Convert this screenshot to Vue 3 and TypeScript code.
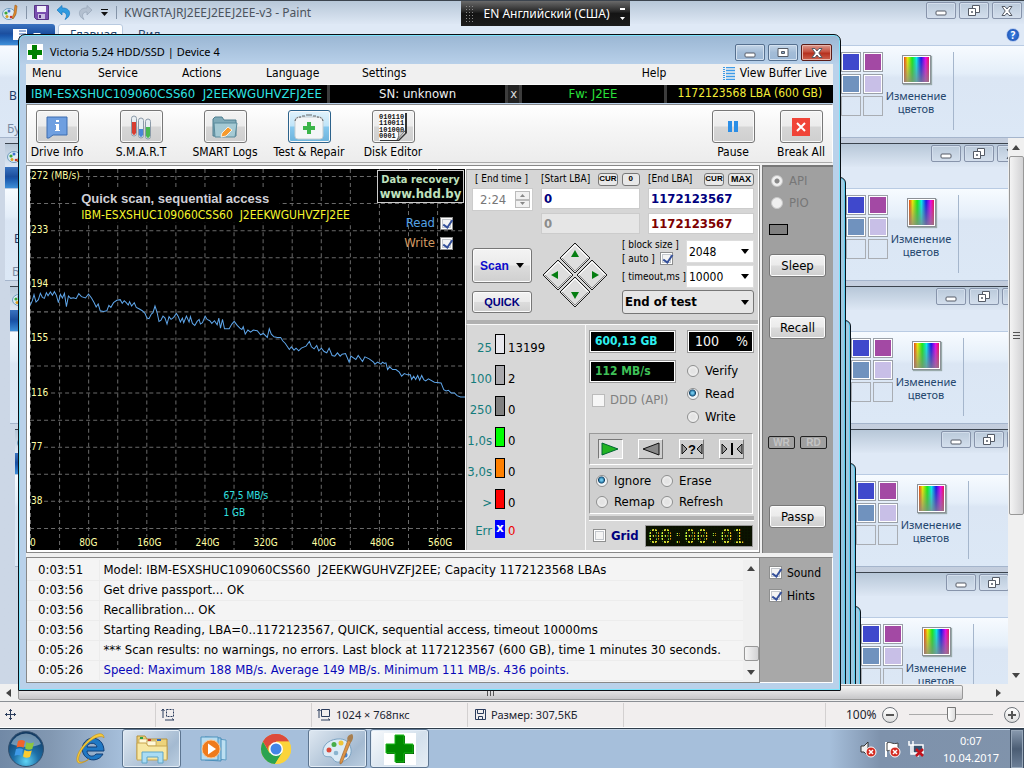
<script setup lang="ts">
import { ref } from 'vue'

interface Stat { label: string; color: string; count: string; err?: boolean }
interface LogRow { time: string; text: string; accent?: boolean }

const layers = [0, 1, 2, 3, 4]
const swatches = ['#3f48cc', '#a349a4', '#7092be', '#c8bfe7', '', '']

const readOn = ref(true)
const writeOn = ref(true)
const autoOn = ref(true)
const sound = ref(true)
const hints = ref(true)
const grid = ref(false)
const mode = ref('Read')
const action = ref('Ignore')
const endTime = ref('2:24')
const startLba = ref('0')
const endLba = ref('1172123567')
const zoomLevel = ref(50)

const stats: Stat[] = [
  { label: '25', color: '#e8e8ee', count: '13199' },
  { label: '100', color: '#a8a8ac', count: '2' },
  { label: '250', color: '#808080', count: '0' },
  { label: '1,0s', color: '#00ff00', count: '0' },
  { label: '3,0s', color: '#ff8000', count: '0' },
  { label: '>', color: '#ff0000', count: '0' },
  { label: 'Err', color: '#0000ff', count: '0', err: true },
]

const log: LogRow[] = [
  { time: '0:03:51', text: 'Model: IBM-ESXSHUC109060CSS60  J2EEKWGUHVZFJ2EE; Capacity 1172123568 LBAs' },
  { time: '0:03:56', text: 'Get drive passport... OK' },
  { time: '0:03:56', text: 'Recallibration... OK' },
  { time: '0:03:56', text: 'Starting Reading, LBA=0..1172123567, QUICK, sequential access, timeout 10000ms' },
  { time: '0:05:26', text: '*** Scan results: no warnings, no errors. Last block at 1172123567 (600 GB), time 1 minutes 30 seconds.' },
  { time: '0:05:26', text: 'Speed: Maximum 188 MB/s. Average 149 MB/s. Minimum 111 MB/s. 436 points.', accent: true },
]

const gridX = Array.from({ length: 15 }, (_, i) => i * 29)
const gridY = Array.from({ length: 14 }, (_, i) => 7 + i * 27)
const speedLabels = ['272 (MB/s)', '233', '194', '155', '116', '77', '38']
const sizeLabels = ['0', '80G', '160G', '240G', '320G', '400G', '480G', '560G']

// Speed samples, three units to one pixel of the chart.
const trace = `31,437 37,424 42,406 48,428 55,421 61,402 67,414 73,417 79,400 84,409 91,398 97,408 103,397 109,408
115,430 121,405 127,416 133,402 139,442 145,410 152,417 160,415 168,418 176,403 184,412 196,416 205,404 214,416
222,430 228,443 234,434 240,454 250,456 260,454 266,438 272,444 280,430 290,423 300,421 306,432 312,424 318,430
324,437 328,427 334,440 342,430 348,444 356,448 366,454 374,462 380,476 386,478 393,464 398,460 404,440 410,458
416,486 422,482 428,470 434,476 440,494 446,472 452,480 460,474 468,462 474,472 480,488 486,476 490,490 498,470
506,488 510,472 516,492 523,498 530,486 536,480 540,494 546,490 554,470 560,480 568,484 574,492 582,484 590,496
595,476 600,506 606,480 612,508 626,508 634,494 641,486 650,498 658,506 664,510 668,502 674,524 682,512 690,518
698,512 710,514 720,526 728,522 740,534 746,508 752,524 760,532 770,534 780,534 786,544 794,552 802,564 806,570
812,562 820,572 826,566 834,574 842,566 856,560 866,546 872,562 880,568 888,558 894,574 902,566 910,576 918,580
925,566 934,588 942,590 950,580 958,590 964,584 974,582 985,608 990,590 1005,600 1012,588 1025,606 1032,592
1045,598 1058,608 1062,614 1070,608 1080,614 1085,608 1090,612 1095,610 1100,630 1106,622 1115,630 1125,630
1135,638 1142,650 1150,642 1160,646 1168,646 1172,660 1178,650 1184,660 1190,648 1196,662 1202,648 1208,660
1214,664 1222,658 1240,668 1260,670 1268,690 1275,694 1282,692 1290,700 1300,700 1308,708 1318,712 1332,712`
</script>

<template>
  <div class="screen">
    <div class="paint">
      <section
        v-for="i in layers"
        :key="'p' + i"
        class="layer"
        :style="{ left: i * 5 + 'px', top: i * 143 + 'px', zIndex: i }"
      >
        <header class="p-title">
          <svg class="palette" width="17" height="17" viewBox="0 0 17 17">
            <ellipse cx="7" cy="10" rx="6.5" ry="5.5" fill="#dcebf5" stroke="#6f9cbd" />
            <circle cx="4" cy="9" r="1.6" fill="#38a53a" /><circle cx="7" cy="7" r="1.5" fill="#3f6fd0" />
            <circle cx="5" cy="12.500" r="1.500" fill="#d8a020" /><circle cx="9" cy="13" r="1.300" fill="#c33" />
            <path d="M13 1l2 1-1 8-3 5-1-1 2-5z" fill="#e08a2c" stroke="#a05c18" stroke-width=".6" />
          </svg>
          <template v-if="i === 0">
            <i class="v-line"></i>
            <svg width="15" height="15" viewBox="0 0 15 15">
              <path d="M.5.5h14v14h-12l-2-2z" fill="#7a4fb0" stroke="#573485" />
              <path d="M3 1h9v6H3z" fill="#f1effa" /><path d="M4 9h7v5H4z" fill="#c9bfe2" /><path d="M5 10h2v3H5z" fill="#573485" />
            </svg>
            <svg width="15" height="15" viewBox="0 0 15 15">
              <path d="M1 5L6 .5V3c9-.5 10 8 3 11.500C12 10 10 7 6 7v3z" fill="#2f9be0" stroke="#1878c0" stroke-width=".7" />
            </svg>
            <svg width="15" height="15" viewBox="0 0 15 15">
              <path d="M14 5L9 .5V3C0 2.500-1 11 6 14.500 3 10 5 7 9 7v3z" fill="#b3c0d0" stroke="#96a5b8" stroke-width=".7" />
            </svg>
            <svg width="9" height="9" viewBox="0 0 9 9"><path d="M1 1h7v1H1zM1 4h7L4.500 8z" fill="#111" /></svg>
            <i class="v-line"></i>
            <span class="p-name">KWGRTAJRJ2EEJ2EEJ2EE-v3 - Paint</span>
          </template>
          <div class="caption">
            <button aria-label="Свернуть"><svg width="12" height="12" viewBox="0 0 12 12"><rect x="1" y="6" width="10" height="4" rx="1" fill="#fff" stroke="#555b66" /></svg></button>
            <button aria-label="Восстановить"><svg width="12" height="12" viewBox="0 0 12 12"><g fill="#fff" stroke="#555b66"><path d="M4.500.5h7v7h-7z" /><path d="M.5 3.500h7v7h-7z" /><path d="M3.500 6.500h1v1h-1z" /></g></svg></button>
            <button aria-label="Закрыть"><svg width="12" height="12" viewBox="0 0 12 12"><path d="M1 1.500h3l2 2.500 2-2.500h3L7.800 6 11 10.500H8L6 8l-2 2.500H1L4.200 6z" fill="#fff" stroke="#555b66" /></svg></button>
          </div>
        </header>
        <nav class="p-tabs">
          <button class="file" aria-label="Файл">
            <svg v-if="i === 0" width="30" height="13" viewBox="0 0 30 13"><path d="M1 1h14v11H1z" fill="#fff" /><path d="M7 3h7M7 6h7M7 9h7" stroke="#2c5fae" /><path d="M21 5h8l-4 4z" fill="#fff" /></svg>
          </button>
          <template v-if="i === 0">
            <a href="#" class="on">Главная</a>
            <a href="#">Вид</a>
            <span class="help">?</span>
          </template>
        </nav>
        <div class="ribbon">
          <div class="clip"><template v-if="i < 2"><span>В</span><small>Бу</small></template></div>
          <div class="swatches">
            <i v-for="(c, n) in swatches" :key="n" :class="{ empty: !c }" :style="{ background: c || 'transparent' }"></i>
          </div>
          <button class="edit">
            <i class="rainbow"></i>
            <span>Изменение<br />цветов</span>
          </button>
          <i class="r-line"></i>
        </div>
      </section>

      <div v-for="i in layers.slice(1)" :key="'g' + i" class="ghost" :style="{ left: 18 + i * 5 + 'px', top: 34 + i * 143 + 'px', zIndex: 9 - i }"></div>

      <div class="v-scroll">
        <svg width="8" height="5" viewBox="0 0 8 5"><path d="M0 5h8L4 0z" fill="#444" /></svg>
        <div class="v-thumb"><i></i></div>
        <svg width="8" height="5" viewBox="0 0 8 5"><path d="M0 0h8L4 5z" fill="#444" /></svg>
      </div>
      <div class="h-scroll">
        <svg width="5" height="8" viewBox="0 0 5 8"><path d="M5 0v8L0 4z" fill="#444" /></svg>
        <div class="h-thumb"><i></i></div>
        <svg width="5" height="8" viewBox="0 0 5 8"><path d="M0 0v8l5-4z" fill="#444" /></svg>
      </div>
    </div>

    <footer class="status">
      <span class="cell"><svg width="11" height="11" viewBox="0 0 11 11"><path d="M5.500 0v11M0 5.500h11M4 2l1.500-1.500L7 2M4 9l1.500 1.500L7 9M2 4L.5 5.500 2 7M9 4l1.500 1.500L9 7" fill="none" stroke="#2b3c5c" /></svg></span>
      <span class="cell"><svg width="14" height="13" viewBox="0 0 14 13"><path d="M2 10V1M.5 3L2 1l1.500 2M4 12h9M11 10.500l2 1.500" fill="none" stroke="#2b3c5c" /><path d="M5.500 1.500h7v7h-7z" fill="none" stroke="#2b3c5c" stroke-dasharray="2 1" /></svg></span>
      <span class="cell"><svg width="14" height="13" viewBox="0 0 14 13"><path d="M2 10V1M.5 3L2 1l1.500 2M4 12h9M11 10.500l2 1.500M4.500 1.500h8v7h-8z" fill="none" stroke="#2b3c5c" /></svg>1024 × 768пкс</span>
      <span class="cell save"><svg width="11" height="11" viewBox="0 0 11 11"><path d="M.5.5h10v10H.5zM2.500.5v4h6v-4M3.500 10.500v-3h4v3" fill="none" stroke="#2b3c5c" /></svg>Размер: 307,5КБ</span>
      <span class="cell rest"></span>
      <label class="zoom"><span>100%</span>
        <button class="round" aria-label="Уменьшить"><svg width="14" height="14" viewBox="0 0 14 14"><path d="M3 6h8v2H3z" fill="#555" /></svg></button>
        <input v-model="zoomLevel" type="range" min="0" max="100" aria-label="Масштаб" />
        <button class="round" aria-label="Увеличить"><svg width="14" height="14" viewBox="0 0 14 14"><path d="M3 6h3V3h2v3h3v2H8v3H6V8H3z" fill="#555" /></svg></button>
      </label>
    </footer>

    <div class="taskbar">
      <button class="orb" aria-label="Пуск">
        <svg width="38" height="38" viewBox="0 0 38 38">
          <defs>
            <radialGradient id="orb" cx=".5" cy=".85" r=".8"><stop offset="0" stop-color="#5fd4f5" /><stop offset=".45" stop-color="#1d6fa8" /><stop offset="1" stop-color="#123a63" /></radialGradient>
          </defs>
          <circle cx="19" cy="19" r="17.500" fill="url(#orb)" stroke="#33506e" />
          <path d="M4 14a16 16 0 0 1 30 0c-8 4-20 4-30 0z" fill="#c8dbe9" opacity=".5" />
          <path d="M11 11c3-1.500 5-1 7 .3l-1.500 6.500c-2-1.200-4-1.500-7-.3z" fill="#f0642c" />
          <path d="M19.500 12c2.500 1.500 4.500 1.600 7.500.3L25.300 19c-2.500 1.200-4.800 1-7.200-.4z" fill="#8cc63e" />
          <path d="M9 19c3-1.300 5-.9 7 .3L14.500 26c-2-1.200-4-1.500-7-.3z" fill="#3f9ae8" />
          <path d="M17.500 20c2.500 1.400 4.700 1.600 7.300.4L23 27c-2.500 1.200-4.800 1-7-.4z" fill="#fccb2f" />
        </svg>
      </button>
      <button class="task" aria-label="Internet Explorer">
        <svg width="34" height="34" viewBox="0 0 34 34">
          <path d="M19 6a11 11 0 1 0 11 16h-7c-3 4-9 2-9-3h17C31 11 26 6 19 6zm-5 9c1-5 9-5 10 0z" fill="#1f78c4" stroke="#123f77" />
          <path d="M31 6c-2-3-9-1-15 4S4 25 6 29c1 2 6 1 10-2-5 4-11 6-12 2C2 22 12 10 19 5s12-4 12 1z" fill="#f6cc3c" stroke="#c58d12" stroke-width=".6" />
        </svg>
      </button>
      <button class="task open" aria-label="Проводник">
        <svg width="34" height="32" viewBox="0 0 34 32">
          <path d="M2 3h8l2 3h20v20H2z" fill="#edd37b" stroke="#b4903c" />
          <path d="M4 6h8v5H4z" fill="#fff8d8" stroke="#b4903c" stroke-width=".6" /><path d="M12 8h9v5h-9z" fill="#fff8d8" stroke="#b4903c" stroke-width=".6" />
          <path d="M5 4h3v2H5z" fill="#2c9e44" /><path d="M13 6h3v2h-3z" fill="#c8382c" /><path d="M22 6h4v2h-4z" fill="#2e68c0" />
          <path d="M2 10h9l2 3h19v14H2z" fill="#f7e7a2" stroke="#c8a651" />
          <path d="M7 30V19h21v11h-5v-6H12v6z" fill="#a9dcf4" stroke="#5ea5c8" />
        </svg>
      </button>
      <button class="task" aria-label="Проигрыватель">
        <svg width="30" height="30" viewBox="0 0 30 30">
          <path d="M11 4l16 2v20l-16-2z" fill="#bcdff2" stroke="#5c9cc4" /><path d="M6 3l16 1v23L6 26z" fill="#9ccdea" stroke="#4a8cb8" /><path d="M2 3h17v23H2z" fill="#b8dcf0" stroke="#4f93bd" />
          <circle cx="12" cy="15" r="9" fill="#ef7b1c" stroke="#fcc48d" /><path d="M9 9.500v11l8-5.500z" fill="#fff" />
        </svg>
      </button>
      <button class="task" aria-label="Chrome">
        <svg width="32" height="32" viewBox="0 0 32 32">
          <circle cx="16" cy="16" r="15" fill="#fbd43c" />
          <path d="M16 16L3 8.500A15 15 0 0 1 29 8.500H16z" fill="#dd4b3c" /><path d="M16 16l-6.500 4L3 8.500A15 15 0 0 0 15 31l7-11z" fill="#2aa350" />
          <path d="M3 8.500A15 15 0 0 1 29 8.500H16a7 7 0 0 0-6.500 11z" fill="#dd4b3c" />
          <path d="M16 8.500h13A15 15 0 0 1 15 31l7-11z" fill="#fbd43c" />
          <circle cx="16" cy="16" r="7" fill="#fff" /><circle cx="16" cy="16" r="5.500" fill="#4285e8" />
        </svg>
      </button>
      <button class="task open" aria-label="Paint">
        <svg width="34" height="32" viewBox="0 0 34 32">
          <path d="M16 6C6 7 1 14 2 20c1 5 5 3 8 4s2 6 9 5c8-1 12-7 11-13S25 5 16 6z" fill="#dcebf6" stroke="#7ba3c2" />
          <circle cx="8" cy="17" r="2.500" fill="#dc4a3a" /><circle cx="13" cy="11.500" r="2.500" fill="#48ad4a" /><circle cx="20" cy="10" r="2.500" fill="#eec53a" /><circle cx="15" cy="20" r="2.300" fill="#8ab4cf" /><circle cx="24" cy="22" r="2.500" fill="#4483d2" />
          <path d="M27 7l3 1-9 22-2 1v-3z" fill="#dd9448" stroke="#9b5f25" stroke-width=".6" /><path d="M27 8c-2-3 0-6 4-7 2 2 1 6-1 8z" fill="#a87f50" />
        </svg>
      </button>
      <button class="task open active" aria-label="Victoria">
        <svg width="32" height="32" viewBox="0 0 32 32"><path d="M0 0h32v32H0z" fill="#fff" /><path d="M12 3h9v9h9v9h-9v9h-9v-9H3v-9h9z" fill="#054d05" /><path d="M11 2h9v9h9v9h-9v9h-9v-9H2v-9h9z" fill="#008a00" stroke="#18b818" /></svg>
      </button>
      <div class="tray">
        <svg width="18" height="18" viewBox="0 0 18 18"><path d="M2 6h3l4-4v14l-4-4H2z" fill="#eee" stroke="#333" /><circle cx="12" cy="12" r="5" fill="#d42a20" stroke="#fff" /><path d="M10 10l4 4m0-4l-4 4" stroke="#fff" stroke-width="1.500" /></svg>
        <svg width="18" height="18" viewBox="0 0 18 18"><path d="M3 2v15" stroke="#fff" stroke-width="2" /><path d="M4 3c4-2 5 2 11 0v8c-6 2-7-2-11 0z" fill="#fff" stroke="#444" /><circle cx="12" cy="12" r="5" fill="#d42a20" stroke="#fff" /><path d="M10 10l4 4m0-4l-4 4" stroke="#fff" stroke-width="1.500" /></svg>
        <svg width="18" height="18" viewBox="0 0 18 18"><path d="M6 5h10v8H6z" fill="#36506c" stroke="#fff" stroke-width="1.500" /><path d="M2 1v4h4V1M4 5v9h7v3" fill="none" stroke="#fff" stroke-width="1.500" /><path d="M9 9l7 7m0-7l-7 7" stroke="#c3121c" stroke-width="2.500" /></svg>
      </div>
      <time class="clock"><span>0:07</span><span>10.04.2017</span></time>
      <button class="peek" aria-label="Свернуть все окна"></button>
    </div>

    <div class="lang"><i class="grip"></i><span>EN Английский (США)</span>
      <svg width="7" height="14" viewBox="0 0 7 14"><path d="M1 1h5v2H1zM1 10h5L3.500 13z" fill="#fff" /></svg>
    </div>

    <main class="victoria">
      <header class="v-title">
        <svg width="16" height="16" viewBox="0 0 16 16"><path d="M0 0h16v16H0z" fill="#fff" /><path d="M5 1h5v5h5v5h-5v4H5v-4H1V6h4z" fill="#008000" /></svg>
        <h1>Victoria 5.24 HDD/SSD | Device 4</h1>
        <div class="caption own">
          <button aria-label="Minimize"><svg width="12" height="12" viewBox="0 0 12 12"><rect x="1" y="6" width="10" height="4" rx="1" fill="#fff" stroke="#555b66" /></svg></button>
          <button aria-label="Maximize"><svg width="12" height="12" viewBox="0 0 12 12"><path d="M1 1.500h10v8H1z" fill="#fff" stroke="#555b66" /><path d="M4.500 4.500h3v2h-3z" fill="#8aa9c8" stroke="#555b66" /></svg></button>
          <button class="close" aria-label="Close"><svg width="12" height="12" viewBox="0 0 12 12"><path d="M1 1.500h3l2 2.500 2-2.500h3L7.800 6 11 10.500H8L6 8l-2 2.500H1L4.200 6z" fill="#fff" stroke="#555b66" /></svg></button>
        </div>
      </header>

      <nav class="menu">
        <a href="#">Menu</a><a href="#">Service</a><a href="#">Actions</a><a href="#">Language</a><a href="#">Settings</a>
        <a href="#" class="m-help">Help</a>
        <button class="live">
          <svg width="13" height="13" viewBox="0 0 13 13"><g stroke="#3d9be8"><path d="M0 .5h2M0 2.500h2M0 4.500h2M0 6.500h2M0 8.500h2M0 10.500h2M0 12.500h2" /><path d="M3 .5h9M3 3.500h9M3 6.500h9M3 9.500h9M3 12.500h9" stroke-width="1.500" /></g></svg>
          View Buffer Live
        </button>
      </nav>

      <div class="info">
        <span class="model">IBM-ESXSHUC109060CSS60&nbsp; J2EEKWGUHVZFJ2EE</span>
        <span class="sn">SN: unknown</span>
        <button class="x">x</button>
        <span class="fw">Fw: J2EE</span>
        <span class="lba">1172123568 LBA (600 GB)</span>
      </div>

      <div class="tools">
        <button class="tool"><i>
          <svg width="22" height="24" viewBox="0 0 22 24"><path d="M1 2h20v18H7l-4 3H1z" fill="#6f9fe0" stroke="#3c6db0" /><path d="M10 5h3v2h-3zM9 9h4v6h1v1H9v-1h1v-5H9z" fill="#fff" /></svg></i>Drive Info</button>
        <button class="tool"><i>
          <svg width="22" height="26" viewBox="0 0 22 26"><g fill="#e8eef2" stroke="#8b9aa8"><rect x="1.500" y="2" width="5" height="20" rx="2.500" /><rect x="8.500" y="4" width="5" height="20" rx="2.500" /><rect x="15.500" y="5" width="5" height="20" rx="2.500" /></g><path d="M2 8h4v11q-2 4-4 0z" fill="#d83c30" /><path d="M9 15h4v6q-2 4-4 0z" fill="#4887d8" /><path d="M16 13h4v9q-2 4-4 0z" fill="#48b850" /></svg></i>S.M.A.R.T</button>
        <button class="tool"><i>
          <svg width="26" height="24" viewBox="0 0 26 24"><path d="M1 4l2-2h7l2 3h12v16H1z" fill="#7faab8" stroke="#4f7f90" /><path d="M2 8h23l-2 14H3z" fill="#a5cad4" stroke="#5b8b9c" /><path d="M9 22l1-4 6-6 4 3-6 6z" fill="#f69a2c" stroke="#fff" stroke-width=".8" /></svg></i>SMART Logs</button>
        <button class="tool sel"><i>
          <svg width="32" height="27" viewBox="0 0 32 27"><rect x="2" y="4" width="28" height="22" rx="3" fill="#f4f6f7" stroke="#c5ced2" /><path d="M2 8q1-4 6-4M30 8q-1-4-6-4" fill="none" stroke="#555" stroke-dasharray="2 1" /><path d="M9 3h3M13 2h6M20 3h3" stroke="#666" /><path d="M14 9h4v4h4v4h-4v4h-4v-4h-4v-4h4z" fill="#3bb54a" /></svg></i>Test &amp; Repair</button>
        <button class="tool"><i class="bits">
          <svg width="30" height="31" viewBox="0 0 30 31"><path d="M2 2h27v20l-8 8H2z" fill="#333" /><path d="M1 1h26v21l-7 7H1z" fill="#fafafa" />
            <g class="binary"><text x="1" y="8">010110</text><text x="1" y="14">110011</text><text x="1" y="21">101000</text><text x="1" y="27">0001</text></g><path d="M27 20c-3 1-5 1-7 0 1 3 1 6-1 9z" fill="#ccc" stroke="#444" stroke-width=".7" /></svg></i>Disk Editor</button>
        <span class="fill"></span>
        <button class="tool"><i><svg width="10" height="11" viewBox="0 0 10 11"><path d="M0 0h4v11H0zM6 0h4v11H6z" fill="#2b8ee6" /></svg></i>Pause</button>
        <button class="tool last"><i><svg width="18" height="18" viewBox="0 0 18 18"><path d="M0 0h18v18H0z" fill="#f04438" /><path d="M5 5l8 8m0-8l-8 8" stroke="#fff" stroke-width="2" /></svg></i>Break All</button>
      </div>

      <div class="body">
        <section class="work">
          <div class="graph">
            <svg class="plot" viewBox="0 0 435 380" preserveAspectRatio="xMinYMin slice">
              <g stroke="#6a6a6a" stroke-dasharray="4 3">
                <path v-for="x in gridX" :key="'x' + x" :d="`M${x + 0.5} 0V380`" />
                <path v-for="y in gridY" :key="'y' + y" :d="`M0 ${y + 0.5}H435`" />
              </g>
              <g transform="translate(-10 -10) scale(.33333)"><polyline :points="trace" fill="none" stroke="#5fa6ea" stroke-width="3" /></g>
              <path d="M49 21h200v16h78v16H49z" />
              <g class="axis">
                <g v-for="(s, n) in speedLabels" :key="s"><rect x="1" :y="54 * n" :width="s.length > 3 ? 46 : s.length * 6" height="11" /><text x="1" :y="10 + 54 * n">{{ s }}</text></g>
                <g v-for="(s, n) in sizeLabels" :key="s"><rect :x="n ? 58 * n - 9 : 1" y="367" :width="n ? (n > 1 ? 22 : 17) : 4" height="12" /><text :x="n ? 58 * n - 9 : 0" y="376">{{ s }}</text></g>
              </g>
              <g class="hint"><text x="193" y="329">67,5 MB/s</text><text x="193" y="346">1 GB</text></g>
              <text class="scan-name" x="51" y="34">Quick scan, sequential access</text>
              <text class="scan-dev" x="51" y="50">IBM-ESXSHUC109060CSS60&nbsp; J2EEKWGUHVZFJ2EE</text>
            </svg>
            <div class="legend">
              <div class="ad"><span>Data recovery</span><b>www.hdd.by</b></div>
              <label class="c-read">Read <input v-model="readOn" type="checkbox" /></label>
              <label class="c-write">Write <input v-model="writeOn" type="checkbox" /></label>
            </div>
          </div>

          <div class="panel">
            <div class="setup">
              <div class="range">
                <div class="col">
                  <label class="cap" for="endtime">[ End time ]</label>
                  <div class="spin"><input id="endtime" v-model="endTime" /><span><button aria-label="Up"><svg width="5" height="3" viewBox="0 0 5 3"><path d="M0 3h5L2.500 0z" fill="#888" /></svg></button><button aria-label="Down"><svg width="5" height="3" viewBox="0 0 5 3"><path d="M0 0h5L2.500 3z" fill="#888" /></svg></button></span></div>
                </div>
                <div class="col">
                  <div class="cap"><label for="startlba">[Start LBA]</label><span class="fill"></span><button class="mini">CUR</button><button class="mini">0</button></div>
                  <input id="startlba" v-model="startLba" class="num" />
                  <input class="num off" value="0" disabled aria-label="Current LBA" />
                </div>
                <div class="col">
                  <div class="cap"><label for="endlba">[End LBA]</label><span class="fill"></span><button class="mini">CUR</button><button class="mini max">MAX</button></div>
                  <input id="endlba" v-model="endLba" class="num" />
                  <input class="num red" value="1172123567" aria-label="Last LBA" />
                </div>
              </div>
              <div class="run">
                <div class="go">
                  <button class="scan">Scan <svg width="8" height="5" viewBox="0 0 8 5"><path d="M0 0h8L4 5z" /></svg></button>
                  <button class="quick">QUICK</button>
                </div>
                <svg class="pad" width="66" height="66" viewBox="0 0 66 66">
                  <g fill="#dedede" stroke="#1a1a1a"><path d="M33 1l15 15-15 15-15-15z" /><path d="M33 35l15 15-15 15-15-15z" /><path d="M16 18l15 15-15 15L1 33z" /><path d="M50 18l15 15-15 15-15-15z" /></g>
                  <g fill="none" stroke="#fff"><path d="M20 16L33 3l13 13" /><path d="M20 50l13-13 13 13" /><path d="M3 33l13-13 13 13" /><path d="M37 33l13-13 13 13" /></g>
                  <g fill="none" stroke="#8a8a8a"><path d="M20 16l13 13 13-13" /><path d="M20 50l13 13 13-13" /><path d="M3 33l13 13 13-13" /><path d="M37 33l13 13 13-13" /></g>
                  <g fill="#067d12"><path d="M29 15h8l-4-7z" /><path d="M29 50h8l-4 7z" /><path d="M16 29v8l-7-4z" /><path d="M50 29v8l7-4z" /></g>
                </svg>
                <div class="opts">
                  <div class="o-row">
                    <div class="o-caps"><label for="bs">[ block size ]</label><label>[ auto ] <input v-model="autoOn" type="checkbox" /></label></div>
                    <select id="bs"><option>2048</option></select>
                  </div>
                  <div class="o-row"><label for="to">[ timeout,ms ]</label><select id="to"><option>10000</option></select></div>
                  <select class="end" aria-label="At end"><option>End of test</option></select>
                </div>
              </div>
            </div>

            <div class="lower">
              <div class="stats">
                <div v-for="s in stats" :key="s.label" class="stat" :class="{ err: s.err }">
                  <span>{{ s.label }}</span><i :style="{ background: s.color }">{{ s.err ? 'x' : '' }}</i><b>{{ s.count }}</b>
                </div>
              </div>
              <div class="ctl">
                <div class="readout">
                  <div class="lcds">
                    <output class="lcd cyan">600,13 GB</output>
                    <output class="lcd green">112 MB/s</output>
                    <label class="ddd"><input type="checkbox" disabled />DDD (API)</label>
                  </div>
                  <div class="modes">
                    <output class="lcd pct"><span>100</span><span>%</span></output>
                    <label v-for="m in ['Verify', 'Read', 'Write']" :key="m"><input v-model="mode" type="radio" :value="m" name="mode" />{{ m }}</label>
                  </div>
                </div>
                <div class="seek">
                  <button class="down" aria-label="Forward"><svg width="22" height="18" viewBox="0 0 22 18"><path d="M3 3l16 6-16 6z" fill="#22b322" stroke="#063" /></svg></button>
                  <button aria-label="Backward"><svg width="22" height="18" viewBox="0 0 22 18"><path d="M19 3v12L3 9z" fill="#888" stroke="#111" /></svg></button>
                  <button aria-label="Random"><svg width="24" height="18" viewBox="0 0 24 18"><path d="M2 4v10l5-5zM22 4v10l-5-5z" fill="#999" stroke="#111" /><text x="8" y="14" class="q">?</text></svg></button>
                  <button aria-label="Butterfly"><svg width="24" height="18" viewBox="0 0 24 18"><path d="M2 4v10l5-5zM22 4v10l-5-5z" fill="#999" stroke="#111" /><path d="M11 3h2v12h-2z" /></svg></button>
                </div>
                <div class="acts">
                  <label v-for="a in ['Ignore', 'Erase', 'Remap', 'Refresh']" :key="a"><input v-model="action" type="radio" :value="a" name="act" />{{ a }}</label>
                </div>
                <i class="bar"></i>
                <div class="timer">
                  <label><input v-model="grid" type="checkbox" />Grid</label>
                  <output class="led">00:00:01</output>
                </div>
              </div>
            </div>
          </div>
        </section>

        <aside class="side">
          <label class="dim"><input type="radio" name="bus" checked disabled />API</label>
          <label class="dim"><input type="radio" name="bus" disabled />PIO</label>
          <i class="lamp"></i>
          <button class="btn">Sleep</button>
          <button class="btn recall">Recall</button>
          <div class="leds"><span>WR</span><span>RD</span></div>
          <button class="btn">Passp</button>
        </aside>
      </div>

      <div class="bottom">
        <div class="log">
          <table><tbody>
            <tr v-for="(r, n) in log" :key="n" :class="{ accent: r.accent }"><td>{{ r.time }}</td><td>{{ r.text }}</td></tr>
          </tbody></table>
          <div class="l-scroll">
            <svg width="8" height="5" viewBox="0 0 8 5"><path d="M0 5h8L4 0z" fill="#444" /></svg><i></i><svg width="8" height="5" viewBox="0 0 8 5"><path d="M0 0h8L4 5z" fill="#444" /></svg>
          </div>
        </div>
        <div class="flags">
          <label><input v-model="sound" type="checkbox" />Sound</label>
          <label><input v-model="hints" type="checkbox" />Hints</label>
        </div>
      </div>
    </main>
  </div>
</template>

<style>
html, body { margin: 0; overflow: hidden; }
</style>

<style scoped>
* { box-sizing: border-box; }
.screen { position: relative; height: 100vh; display: flex; flex-direction: column; overflow: hidden; font: 12px/16px "DejaVu Sans Condensed", "Noto Sans", sans-serif; color: #000; }
button, input, select { font: inherit; color: inherit; margin: 0; padding: 0; border: 0; background: none; }
a { color: inherit; text-decoration: none; }
i { font-style: normal; display: block; flex: none; }
svg { flex: none; display: block; }
.fill { flex: 1; }

/* Paint */
.paint { flex: 1; position: relative; overflow: hidden; background: #c8d2e2; }
.layer { position: absolute; width: 100%; height: 100%; background: linear-gradient(90deg, #ccd7e6, #c3cddd); border-top: 1px solid #3c444e; display: flex; flex-direction: column; font: 12px/13px "Noto Sans", "Open Sans", sans-serif; }
.p-title { height: 23px; display: flex; align-items: center; gap: 7px; padding: 0 2px; background: linear-gradient(#b7c7d8, #dde7f4); }
.p-title .v-line { width: 1px; height: 13px; background: #8494a8; }
.p-name { color: #4c545e; }
.caption { margin-left: auto; display: flex; gap: 3px; align-self: flex-start; padding-top: 1px; }
.caption button { width: 30px; height: 17px; display: grid; place-items: center; border: 1px solid #8794ab; border-radius: 2px; box-shadow: inset 0 0 0 1px #d3deec; }
.p-tabs { height: 21px; display: flex; align-items: center; background: #dfe9f6; color: #26476f; }
.p-tabs a { height: 22px; margin-left: 3px; padding: 3px 20px 0 11px; border-radius: 3px 3px 0 0; border: 1px solid transparent; }
.p-tabs a.on { width: 65px; padding-right: 0; background: #fff; border-color: #b8cae0; }
.file { width: 55px; height: 21px; display: grid; place-items: center end; padding-right: 13px; background: linear-gradient(#3a73c0, #1c4f9f 45%, #1a56ab 55%, #3e8fd8); border-radius: 0 3px 0 0; }
.help { margin: 0 4px 0 auto; width: 14px; height: 14px; border-radius: 50%; background: radial-gradient(#3d86e8, #1747a8); border: 1px solid #b9cdf0; color: #fff; font-weight: 700; font-size: 10px; line-height: 12px; text-align: center; }
.ribbon { height: 93px; display: flex; justify-content: flex-end; padding: 6px 70px 0 7px; border-top: 1px solid #b9cbe3; border-bottom: 1px solid #a5b5cc; background: linear-gradient(#f7fbff, #e4eef9 30%, #dbe6f4 35%, #dce8f6); }
.clip { margin-right: auto; display: flex; flex-direction: column; padding-top: 37px; gap: 20px; color: #1e3a66; }
.clip span { padding-left: 2px; }
.clip small { font-size: 12px; color: #7b8ba3; }
.swatches { display: grid; grid-template-columns: 20px 20px; grid-auto-rows: 20px; gap: 2px; margin-right: 3px; align-content: start; }
.swatches i { border: 1px solid #9aa0a8; box-shadow: inset 0 0 0 1px #fff; }
.swatches i.empty { box-shadow: none; border-color: #a9adb3; }
.edit { width: 60px; display: flex; flex-direction: column; align-items: center; padding-top: 3px; gap: 5px; color: #26476f; font-size: 11px; }
.rainbow { width: 29px; height: 29px; border: 1px solid #8c9096; box-shadow: inset 0 0 0 1px #fff, 1px 1px 1px #9aa; padding: 2px; background: linear-gradient(transparent, #888c), linear-gradient(90deg, #e11, #ee0 17%, #1e1 34%, #0ee 50%, #11e 67%, #e0e 84%, #e12); }
.r-line { width: 1px; height: 78px; background: #a5b6cc; margin-left: 7px; }
.ghost { position: absolute; width: calc(100% - 201px); height: 100%; border: 1px solid #08131c; border-radius: 6px 6px 0 0; box-shadow: inset 0 0 0 1px #5ccdf0; background: linear-gradient(#a4c9df, #8bc0dd); }
.v-scroll { position: absolute; z-index: 20; top: 138px; right: 0; bottom: 17px; width: 16px; background: #f0f0f0; display: flex; flex-direction: column; align-items: center; padding: 7px 0 6px; gap: 6px; }
.v-thumb { width: 15px; flex: 1; margin-bottom: 152px; border: 1px solid #989898; border-radius: 2px; background: linear-gradient(90deg, #f4f4f4, #d2d2d4); display: grid; place-items: center; }
.v-thumb i { width: 7px; height: 8px; background: repeating-linear-gradient(#555 0 1px, transparent 1px 3px); }
.h-scroll { position: absolute; z-index: 20; left: 0; right: 0; bottom: 0; height: 17px; background: #f0f0f0; display: flex; align-items: center; padding: 0 23px 0 6px; gap: 7px; }
.h-thumb { height: 15px; flex: 1; margin-right: 26px; border: 1px solid #989898; border-radius: 2px; background: linear-gradient(#f4f4f4, #c6c6c8); display: grid; place-items: center; }
.h-thumb i { width: 8px; height: 7px; background: repeating-linear-gradient(90deg, #555 0 1px, transparent 1px 3px); }

.status { height: 27px; display: flex; align-items: center; background: #f1eeee; border-top: 1px solid #8b8f94; border-bottom: 1px solid #fff; font: 11px/16px "Noto Sans", sans-serif; color: #1c2430; }
.cell { width: 156px; height: 24px; border-right: 1px solid #d3d0d0; display: flex; align-items: center; gap: 5px; padding-left: 5px; white-space: nowrap; }
.cell.save { padding-left: 7px; }
.cell.rest { flex: 1; }
.zoom { width: 198px; display: flex; align-items: center; gap: 6px; padding-left: 20px; }
.zoom span { width: 30px; font-size: 12px; }
.round { width: 16px; height: 16px; border: 1px solid #6d7278; border-radius: 50%; background: linear-gradient(#fff, #dedede); flex: none; }
.zoom input { appearance: none; width: 94px; height: 16px; background: linear-gradient(#aaa, #aaa) center / 84px 1px no-repeat; }
.zoom input::-webkit-slider-thumb { appearance: none; width: 9px; height: 15px; border: 1px solid #777; border-radius: 1px 1px 5px 5px; background: linear-gradient(90deg, #fff, #ddd); }

.taskbar { height: 40px; display: flex; align-items: center; gap: 3px; border-top: 1px solid #2f3c4a; background: linear-gradient(90deg, #7189a6, #8298b2 5%, #a6bfdb 12%, #a6bfdb 81%, #7e92ac 86%, #8093ab); box-shadow: inset 0 1px 0 #c3d4e6; }
.orb { margin: 0 12px 0 7px; }
.task { width: 59px; height: 39px; display: grid; place-items: center; border: 1px solid transparent; border-radius: 3px; }
.task.open { border-color: #5d7590; box-shadow: inset 0 0 0 1px #e2ecf6; background: linear-gradient(135deg, #dfe8f1, #a4bad1 70%, #bccfe1); }
.task.active { background: linear-gradient(135deg, #f8fafc, #d3e0ec 60%, #e6eef5); }
.tray { margin-left: auto; display: flex; gap: 6px; margin-right: 10px; }
.clock { width: 66px; display: flex; flex-direction: column; align-items: center; color: #fff; font: 11px/17px "Noto Sans", sans-serif; margin-right: 3px; }
.peek { width: 14px; height: 40px; border: 1px solid #3f4f63; box-shadow: inset 0 0 0 1px #98a8ba; background: linear-gradient(#8a9bb0, #4b5d74 50%, #6d8098); }

.lang { position: absolute; z-index: 40; left: 461px; top: 1px; width: 169px; height: 25px; display: flex; align-items: center; padding: 0 4px; gap: 8px; color: #fff; background: linear-gradient(#6a6a6a, #2b2b2b 40%, #141414 50%, #1c1c1c); font: 12px/16px "Noto Sans", sans-serif; white-space: nowrap; justify-content: space-between; }
.grip { width: 9px; height: 17px; background: radial-gradient(#888 1px, transparent 1px) 0 0 / 3px 3px; }

/* Victoria window */
.victoria { position: absolute; z-index: 30; left: 18px; top: 34px; right: 183px; bottom: 77px; display: flex; flex-direction: column; padding: 0 7px 7px; border: 1px solid #0a0f14; border-radius: 7px 7px 1px 1px; background: linear-gradient(#9ab6d3, #b9d1ea 30px, #b9d1ea); box-shadow: inset 0 0 0 1px #7be3fb; }
.v-title { height: 29px; display: flex; align-items: center; gap: 7px; padding: 5px 1px 0 1px; }
.v-title h1 { margin: 0; font: 11px/16px "Noto Sans", sans-serif; }
.caption.own { padding-top: 4px; }
.caption.own button { border-color: #56708f; box-shadow: inset 0 0 0 1px #d3e1f0; background: linear-gradient(#c4d5e8, #a3bcd7 50%, #9cb8d6); }
.caption.own .close { width: 31px; border-color: #5b1c17; background: linear-gradient(#dc9a8e, #c5503f 45%, #b5301e 55%, #cd6350); box-shadow: inset 0 0 0 1px #e8b5ab; }
.menu { height: 21px; display: flex; align-items: center; background: #f0f0f0; padding: 0 6px 2px; border-bottom: 1px solid #fafafa; }
.menu a { width: 84px; }
.menu a:first-child { width: 66px; }
.menu a:nth-child(4) { width: 96px; }
.menu .m-help { margin-left: auto; width: 81px; }
.live { display: flex; align-items: center; gap: 4px; white-space: nowrap; }
.info { height: 18px; flex: none; display: flex; background: #000; font-size: 13px; }
.info > * { text-align: center; line-height: 17px; white-space: nowrap; border-right: 3px solid #3c3c3c; }
.model { flex: 306; width: 0; color: #2fe4e4; }
.sn { flex: 178; width: 0; color: #f0f0f0; }
.x { width: 14px; color: #ddd; background: #222; line-height: 14px; }
.fw { flex: 144; width: 0; color: #29e03a; }
.info .lba { flex: 169; width: 0; color: #f4ec3a; border: 0; font-size: 12px; }
.tools { flex: none; height: 59px; margin-top: 1px; display: flex; padding: 5px 0 0; border: 1px solid #888; border-right-color: #fff; border-bottom-color: #aaa; box-shadow: inset 1px 1px 0 #fff; background: linear-gradient(#fff, #f6f6f6 40%, #ececec); overflow: hidden; }
.tool { width: 84px; display: flex; flex-direction: column; align-items: center; white-space: nowrap; gap: 1px; line-height: 17px; }
.tool:first-child { width: 60px; margin-right: 12px; }
.tool.last { width: 52px; margin-right: 5px; }
.tool i { width: 43px; height: 33px; display: grid; place-items: center; border: 1px solid #777; border-radius: 3px; box-shadow: inset 0 0 0 1px #fafafa; background: linear-gradient(#f3f3f3, #ececec 48%, #d6d6d6 52%, #cfcfcf); overflow: hidden; }
.tool.sel i { border-color: #2c628b; background: linear-gradient(#e2f3fc, #bfe4f8 48%, #86c8ee 52%, #6cb3dc); }
.binary { font: 700 7px/7px "Liberation Mono", monospace; fill: #111; }

.body { flex: 1; min-height: 0; display: flex; gap: 2px; padding: 2px 0 4px; background: #f0f0f0; }
.work { flex: 1; min-width: 0; display: flex; padding: 3px 1px 2px 3px; border: 1px solid #888; background: #fff; }
.graph { flex: 1; min-width: 0; position: relative; background: #000; overflow: hidden; }
.plot { width: 100%; height: 100%; }
.axis { font: 10px "DejaVu Sans Condensed", sans-serif; fill: #ffffa5; }
.axis rect { fill: #000; }
.hint { font: 10px "DejaVu Sans Condensed", sans-serif; fill: #30e0e0; }
.scan-name { font: 700 13px "Liberation Sans", sans-serif; fill: #cfcfd6; }
.scan-dev { font-size: 12px; fill: #f5f52c; }
.legend { position: absolute; top: 1px; right: 1px; display: flex; flex-direction: column; align-items: flex-end; }
.ad { width: 87px; height: 33px; border: 1px solid #ccc; background: #000; color: #bfe0bd; font: 700 12px/14px "DejaVu Sans Condensed", sans-serif; display: flex; flex-direction: column; align-items: center; padding-top: 2px; margin-bottom: 10px; white-space: nowrap; }
.ad span { font-size: 11px; }
.ad b { font-size: 13px; }
.legend label { height: 20px; display: flex; align-items: center; gap: 5px; padding-right: 11px; font-size: 13px; }
.c-read { color: #55a3e6; }
.c-write { color: #d29a63; }

input[type='checkbox'] { appearance: none; position: relative; width: 13px; height: 13px; flex: none; border: 1px solid #8e8f8f; background: #f4f4f4; box-shadow: inset 0 0 0 1px #fff, inset 0 0 0 2px #c3c7cc; }
input[type='checkbox']:checked::after { content: ''; position: absolute; left: 4px; top: 0; width: 4px; height: 8px; border: solid #35509a; border-width: 0 2px 2px 0; transform: rotate(35deg); }
input[type='checkbox']:disabled { border-color: #bbb; box-shadow: none; background: #f6f6f6; }
input[type='radio'] { appearance: none; width: 12px; height: 12px; flex: none; border: 1px solid #8e8f8f; border-radius: 50%; background: radial-gradient(#e4e4e4 30%, #fafafa); }
input[type='radio']:checked { background: radial-gradient(circle at 45% 40%, #6fc5ea 0 1px, #135a87 3px, #0f3d60 3px, #f0f4f7 4px); }
input[type='radio']:disabled { border-color: #c8c8c8; background: #efefef; }
input[type='radio']:checked:disabled { background: radial-gradient(#888 0 2px, #f0f0f0 3px); }
select { appearance: none; border-radius: 0; background: #fff url("data:image/svg+xml,%3Csvg xmlns='http://www.w3.org/2000/svg' width='8' height='5'%3E%3Cpath d='M0 0h8L4 5z'/%3E%3C/svg%3E") right 4px center no-repeat; }

.panel { width: 293px; flex: none; display: flex; flex-direction: column; padding-left: 1px; }
.setup { flex: none; height: 151px; background: #d6d6d6; border-top: 1px solid #888; border-left: 1px solid #aaa; padding: 1px 4px 0 5px; }
.range { display: flex; gap: 8px; height: 71px; }
.col { width: 61px; display: flex; flex-direction: column; gap: 4px; }
.col + .col { width: 99px; }
.col + .col + .col { width: 106px; }
.cap { height: 13px; display: flex; align-items: center; gap: 4px; white-space: nowrap; font-size: 10px; padding-top: 3px; }
label.cap { padding-left: 3px; }
.mini { width: 20px; height: 13px; font: 700 8px/10px "Liberation Sans", sans-serif; border: 1px solid #777; border-radius: 3px; background: #e8e8e8; }
.mini.max { width: 26px; font-size: 9px; }
.num { width: 100%; height: 21px; border: 1px solid #ccc; background: #fff; font-weight: 700; font-size: 13px; color: #00007e; padding-left: 2px; }
.num.off { background: #e6e6e6; color: #8c8c8c; }
.num.red { color: #7e0000; }
.spin { width: 61px; height: 23px; display: flex; background: #fff; border: 1px solid #ccc; padding: 2px; color: #777; }
.spin input { width: 40px; padding-left: 5px; font-size: 13px; }
.spin span { display: flex; flex-direction: column; width: 15px; margin-left: auto; }
.spin button { flex: 1; border: 1px solid #bbb; background: #f1f1f1; display: grid; place-items: center; }
.run { display: flex; gap: 10px; align-items: flex-start; }
.go { width: 60px; display: flex; flex-direction: column; gap: 8px; padding-top: 6px; font: 700 12px/14px "Liberation Sans", sans-serif; }
.go button, .btn { border: 1px solid #777; border-radius: 3px; box-shadow: inset 0 0 0 1px #fcfcfc; background: linear-gradient(#f3f3f3, #ebebeb 48%, #dcdcdc 52%, #cfcfcf); }
.scan { height: 35px; display: flex; align-items: center; justify-content: center; gap: 7px; color: #0a0acc; }
.quick { height: 22px; color: #00007e; font-size: 11px; }
.opts { flex: 1; display: flex; flex-direction: column; gap: 2px; font-size: 10px; padding-left: 4px; margin-top: -2px; white-space: nowrap; }
.o-row { display: flex; align-items: center; height: 23px; justify-content: space-between; }
.o-caps { line-height: 14px; }
.o-caps label { display: flex; align-items: center; gap: 5px; }
.opts select { width: 68px; height: 23px; font-size: 12px; padding-left: 2px; border: 1px solid #ddd; }
.opts select.end { width: 132px; height: 24px; font-weight: 700; font-size: 13px; border: 1px solid #777; border-radius: 3px; background-color: #e6e6e6; }

.lower { flex: 1; min-height: 0; display: flex; border-top: 4px solid #b0b0b0; background: #d8d8d8; }
.stats { width: 120px; border: 1px solid #f8f8f8; border-left-color: #aaa; border-bottom: 0; padding-top: 9px; font-size: 13px; background: #d7d7d7; }
.stat { height: 31px; display: grid; grid-template-columns: 25px 10px 1fr; gap: 3px; align-items: start; line-height: 28px; color: #147c7c; }
.stat span { text-align: right; }
.stat i { height: 20px; border: 1px solid #000; }
.stat b { font-weight: 400; color: #000; }
.stat.err { height: 20px; line-height: 22px; }
.stat.err i { border: 0; height: 18px; color: #fff; font-weight: 700; text-align: center; line-height: 16px; }
.stat.err b { color: #e00; }
.ctl { flex: 1; min-width: 0; display: flex; flex-direction: column; border-top: 1px solid #fafafa; padding: 5px 4px 0 3px; font-size: 13px; }
.readout { flex: none; display: flex; justify-content: space-between; height: 103px; }
.lcds { width: 87px; display: flex; flex-direction: column; gap: 7px; }
.lcd { height: 23px; background: #000; border: 1px solid #999; box-shadow: inset 0 0 0 1px #fff; font-weight: 700; font-size: 12px; line-height: 20px; padding-left: 5px; white-space: nowrap; }
.cyan { color: #2ef0f0; }
.green { color: #3fc158; }
.pct { display: flex; justify-content: space-between; color: #f4f4f4; font-weight: 400; font-size: 14px; padding: 0 5px 0 7px; margin-bottom: 6px; }
.ddd { display: flex; align-items: center; gap: 5px; padding: 2px 0 0 3px; color: #808080; white-space: nowrap; }
.modes { width: 67px; display: flex; flex-direction: column; }
.modes label { height: 23px; display: flex; align-items: center; gap: 6px; }
.seek { flex: none; height: 32px; display: flex; justify-content: space-around; align-items: center; border: 1px solid #999; border-right-color: #fff; border-bottom-color: #fff; background: #cfcfcf; margin-right: 1px; }
.seek button { width: 25px; height: 20px; display: grid; place-items: center; border: 1px solid #fff; border-right-color: #777; border-bottom-color: #777; }
.seek button.down { border-color: #777 #fff #fff #777; background: #e2e2e2; }
.q { font: 700 13px "Liberation Sans", sans-serif; }
.acts { flex: none; height: 46px; margin: 3px 1px 2px 0; display: grid; grid-template-columns: 65px 1fr; padding: 1px 0 0 6px; align-items: center; border: 1px solid #999; border-right-color: #fff; border-bottom-color: #fff; background: #cfcfcf; }
.acts label, .timer label { display: flex; align-items: center; gap: 6px; }
.bar { height: 5px; background: #b0b0b0; border-bottom: 1px solid #fff; }
.timer { flex: 1; min-height: 0; display: flex; align-items: center; justify-content: space-between; padding: 0 1px 0 4px; font-weight: 700; color: #00007e; }
.timer label { gap: 5px; }
.led { position: relative; width: 108px; height: 22px; background: #000; border: 1px solid #999; color: #ffff3c; font: 400 20px/20px "DejaVu Sans Mono", monospace; padding-left: 2px; overflow: hidden; }
.led::after { content: ''; position: absolute; inset: 0; background: repeating-linear-gradient(transparent 0 2px, #0a1400 2px 3px), repeating-linear-gradient(90deg, #40600028 0 2px, #0a1400 2px 3px); }

.side { width: 71px; flex: none; background: #a0a0a0; border: 1px solid #777; border-width: 2px 0 0 1px; display: flex; flex-direction: column; align-items: flex-start; padding: 3px 6px 25px 6px; font-size: 13px; }
.dim { display: flex; align-items: center; gap: 6px; height: 22px; padding-left: 2px; color: #777; }
.lamp { width: 19px; height: 11px; border: 1px solid #000; background: #808080; margin: 10px 0 19px; }
.btn { width: 57px; height: 23px; }
.recall { margin-top: 39px; }
.leds { display: flex; gap: 5px; margin: auto 0 56px -1px; }
.leds span { width: 27px; height: 13px; border: 1px solid #222; border-radius: 2px; font: 700 10px/11px "Liberation Sans", sans-serif; color: #c4c4c4; text-align: center; }

.bottom { height: 126px; flex: none; display: flex; background: #f0f0f0; }
.log { flex: 1; min-width: 0; display: flex; border: 1px solid #888; background: #f4f4f4; padding: 2px 0 0; font-size: 13px; }
table { flex: 1; width: 0; border-collapse: collapse; table-layout: fixed; align-self: flex-start; }
td { height: 20px; padding: 0 0 0 4px; border-bottom: 1px solid #ececec; white-space: pre; line-height: 16px; }
td:first-child { width: 72px; padding-left: 11px; border-right: 1px solid #ececec; }
.accent td:last-child { color: #0808b8; }
.l-scroll { width: 16px; flex: none; display: flex; flex-direction: column; align-items: center; padding: 6px 0 7px; background: #f0f0f0; }
.l-scroll i { margin: auto 0 9px; width: 15px; height: 15px; border: 1px solid #989898; border-radius: 2px; background: linear-gradient(90deg, #f6f6f6, #d2d2d4); }
.flags { width: 73px; background: #a8a8a8; border: solid #fff; border-width: 0 1px 1px 0; border-top: 1px solid #888; padding: 3px 0 0 9px; }
.flags label { display: flex; align-items: center; gap: 5px; height: 23px; }
</style>
